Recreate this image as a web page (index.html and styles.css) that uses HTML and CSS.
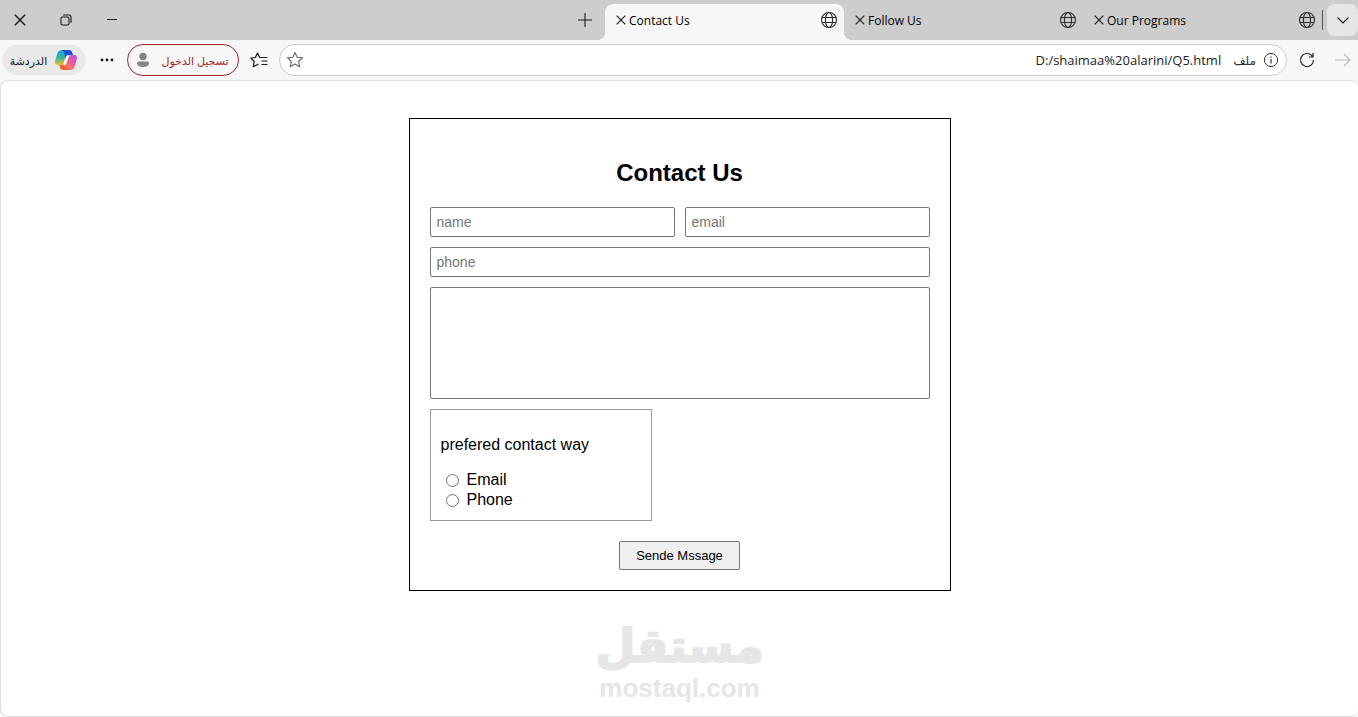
FILE: index.html
```html
<!DOCTYPE html>
<html lang="en">

<head>
    <meta charset="UTF-8">
    <meta name="viewport" content="width=device-width, initial-scale=1.0">
    <title>Contact Us</title>
    <link rel="stylesheet" href="styles.css">
</head>

<body>

    <!-- Shared icons -->
    <svg class="icon-defs" aria-hidden="true">
        <symbol id="icon-close" viewBox="0 0 10 10">
            <path d="M0.7 0.7 L9.3 9.3 M9.3 0.7 L0.7 9.3" fill="none" stroke="currentColor" stroke-width="1.2"/>
        </symbol>
        <symbol id="icon-globe" viewBox="0 0 18 18">
            <g fill="none" stroke="#2b2b2b" stroke-width="1.1">
                <circle cx="9" cy="9" r="7.5"/>
                <ellipse cx="9" cy="9" rx="3.6" ry="7.5"/>
                <path d="M2 6.5 H16 M2 11.5 H16"/>
            </g>
        </symbol>
    </svg>

    <!-- Tab bar -->
    <div class="tab-bar">
        <div class="window-buttons">
            <button type="button" aria-label="Close window">
                <svg width="12" height="12"><use href="#icon-close"/></svg>
            </button>
            <button type="button" aria-label="Restore window">
                <svg width="12" height="12" viewBox="0 0 12 12" fill="none" stroke="currentColor" stroke-width="1.1">
                    <rect x="1" y="3" width="8" height="8" rx="1.5"/>
                    <path d="M3.2 1 H9 Q11 1 11 3 V8.8"/>
                </svg>
            </button>
            <button type="button" aria-label="Minimize window">
                <svg width="12" height="12" viewBox="0 0 12 12"><path d="M1 5.5 H11" stroke="currentColor"/></svg>
            </button>
        </div>
        <button type="button" class="new-tab" aria-label="New tab">
            <svg width="16" height="16" viewBox="0 0 16 16"><path d="M8 1 V15 M1 8 H15" stroke="currentColor" stroke-width="1.1"/></svg>
        </button>
        <div class="tab active">
            <button type="button" aria-label="Close tab"><svg width="10" height="10"><use href="#icon-close"/></svg></button>
            <span>Contact Us</span>
            <svg class="globe" width="18" height="18"><use href="#icon-globe"/></svg>
        </div>
        <div class="tab">
            <button type="button" aria-label="Close tab"><svg width="10" height="10"><use href="#icon-close"/></svg></button>
            <span>Follow Us</span>
            <svg class="globe" width="18" height="18"><use href="#icon-globe"/></svg>
        </div>
        <div class="tab">
            <button type="button" aria-label="Close tab"><svg width="10" height="10"><use href="#icon-close"/></svg></button>
            <span>Our Programs</span>
            <svg class="globe" width="18" height="18"><use href="#icon-globe"/></svg>
        </div>
        <div class="divider"></div>
        <button type="button" class="tab-menu" aria-label="Tab menu">
            <svg width="14" height="14" viewBox="0 0 14 14"><path d="M1.5 4.5 L7 10 L12.5 4.5" fill="none" stroke="currentColor" stroke-width="1.2"/></svg>
        </button>
    </div>

    <!-- Toolbar -->
    <div class="toolbar">
        <button type="button" class="chat">
            <span dir="rtl" lang="ar">الدردشة</span>
            <svg width="24" height="22" viewBox="0 0 24 22">
                <defs>
                    <linearGradient id="cool" x1="0" y1="0" x2="0" y2="1">
                        <stop offset="0" stop-color="#1b9de2"/>
                        <stop offset="0.5" stop-color="#37b6a0"/>
                        <stop offset="1" stop-color="#f1c318"/>
                    </linearGradient>
                    <linearGradient id="warm" x1="1" y1="0" x2="0.2" y2="1">
                        <stop offset="0" stop-color="#a35cf0"/>
                        <stop offset="0.5" stop-color="#ee5a9a"/>
                        <stop offset="1" stop-color="#fb8a44"/>
                    </linearGradient>
                </defs>
                <path d="M8 1 H14 L9.5 14 Q8.8 16 6.8 16 H4 Q0 16 1.2 11.5 L3.4 4.5 Q4.5 1 8 1 Z" fill="url(#cool)"/>
                <path d="M8 1 H15.5 Q17.5 1 18.2 3.5 L19 6 H15 Q12.8 6 12 8.5 L11 11 Q11.8 4 8 1 Z" fill="#1c4fd1"/>
                <path d="M16 21 H10 L14.5 8 Q15.2 6 17.2 6 H20 Q24 6 22.8 10.5 L20.6 17.5 Q19.5 21 16 21 Z" fill="url(#warm)"/>
                <path d="M16 21 H9 Q6.7 21 6 18.5 L5.2 16 H7 Q9 16 9.8 13.5 L11 10.5 Q10.5 18 16 21 Z" fill="#f4653c"/>
                <path d="M13.5 7.5 L10.5 15" stroke="#fff" stroke-width="2.4" stroke-linecap="round"/>
            </svg>
        </button>
        <button type="button" class="more" aria-label="More">
            <svg width="14" height="4" viewBox="0 0 14 4" fill="currentColor">
                <circle cx="2" cy="2" r="1.4"/>
                <circle cx="7" cy="2" r="1.4"/>
                <circle cx="12" cy="2" r="1.4"/>
            </svg>
        </button>
        <button type="button" class="sign-in">
            <svg width="12" height="16" viewBox="0 0 12 16" fill="#858585">
                <circle cx="6" cy="4.5" r="3.7"/>
                <path d="M1.5 9.5 H10.5 Q12 9.5 12 11 Q12 15 6 15 Q0 15 0 11 Q0 9.5 1.5 9.5 Z"/>
            </svg>
            <span dir="rtl" lang="ar">تسجيل الدخول</span>
        </button>
        <button type="button" class="favorites" aria-label="Favorites">
            <svg width="18" height="16" viewBox="0 0 18 16" fill="none" stroke="currentColor" stroke-width="1.2" stroke-linejoin="round" stroke-linecap="round">
                <path d="M11 5.5 H9.6 L7.5 1 L5.4 5.5 L1 6.2 L4.2 9.5 L3.3 14.7 L8 12.2 M11 5.5 H17 M12 9 H17 M12 12.5 H17"/>
            </svg>
        </button>
        <div class="address-bar">
            <button type="button" aria-label="Add to favorites">
                <svg width="18" height="18" viewBox="0 0 18 18" fill="none" stroke="#666" stroke-width="1.1" stroke-linejoin="round">
                    <path d="M9 1.5 L11.2 6.3 L16.5 6.9 L12.6 10.5 L13.7 15.8 L9 13.1 L4.3 15.8 L5.4 10.5 L1.5 6.9 L6.8 6.3 Z"/>
                </svg>
            </button>
            <input type="text" class="url" aria-label="Address" value="D:/shaimaa%20alarini/Q5.html">
            <span class="file" dir="rtl" lang="ar">ملف</span>
            <svg width="16" height="16" viewBox="0 0 16 16" fill="none" stroke="#333">
                <circle cx="8" cy="8" r="6.6"/>
                <path d="M8 7 V11.5 M8 4.5 V5.7" stroke-width="1.2"/>
            </svg>
        </div>
        <button type="button" class="reload" aria-label="Reload">
            <svg width="16" height="16" viewBox="0 0 16 16" fill="none" stroke="#222" stroke-width="1.2">
                <path d="M14.5 8 A6.5 6.5 0 1 1 12.8 3.6 L14 5 M14 1 V5 H10"/>
            </svg>
        </button>
        <button type="button" class="forward" aria-label="Forward">
            <svg width="18" height="16" viewBox="0 0 18 16" fill="none" stroke="#bbb" stroke-width="1.2">
                <path d="M1 8 H16 M10 2 L16 8 L10 14"/>
            </svg>
        </button>
    </div>

    <!-- Page -->
    <main class="page">
        <form class="contact-form">
            <h2>Contact Us</h2>
            <div class="fields">
                <input type="text" placeholder="name" aria-label="name">
                <input type="email" placeholder="email" aria-label="email">
                <input type="tel" class="wide" placeholder="phone" aria-label="phone">
                <textarea class="wide" aria-label="message"></textarea>
            </div>
            <div class="contact-way" role="radiogroup" aria-labelledby="way-title">
                <p id="way-title">prefered contact way</p>
                <div class="option">
                    <input type="radio" id="way-email" name="way">
                    <label for="way-email">Email</label>
                </div>
                <div class="option">
                    <input type="radio" id="way-phone" name="way">
                    <label for="way-phone">Phone</label>
                </div>
            </div>
            <button type="button" class="send">Sende Mssage</button>
        </form>

        <div class="watermark">
            <span class="watermark-name" dir="rtl" lang="ar">مستقل</span>
            <span class="watermark-site">mostaql.com</span>
        </div>
    </main>

</body>

</html>
```

FILE: styles.css
```css
* {
    box-sizing: border-box;
}

body {
    display: flex;
    flex-direction: column;
    min-height: 100vh;
    margin: 0;
    background-color: #f7f7f7;
    font-family: "Liberation Sans", Arial, sans-serif;
    color: #000;
}

svg {
    display: block;
    flex-shrink: 0;
}

.icon-defs {
    display: none;
}

/* Browser bars */
.tab-bar,
.toolbar {
    display: flex;
    align-items: center;
    height: 40px;
    font-family: "Open Sans", "DejaVu Sans", sans-serif;
    font-size: 12px;
}

.tab-bar {
    background-color: #cdcdcd;
}

.tab-bar button,
.toolbar button {
    display: flex;
    align-items: center;
    justify-content: center;
    padding: 0;
    border: none;
    background: none;
    color: #1a1a1a;
    font: inherit;
}

.toolbar .chat,
.toolbar .sign-in {
    font-size: 11px;
}

.window-buttons {
    display: flex;
    gap: 34px;
    padding-left: 14px;
}

.tab-bar .new-tab {
    width: 40px;
    height: 40px;
    margin-left: auto;
}

.tab {
    display: flex;
    align-items: center;
    gap: 3px;
    width: 239px;
    height: 36px;
    margin-top: 4px;
    padding: 0 6px 4px 11px;
}

.tab .globe {
    margin-left: auto;
}

.tab.active {
    position: relative;
    background-color: #f7f7f7;
    border-radius: 8px 8px 0 0;
}

/* Curved feet of the active tab */
.tab.active::before,
.tab.active::after {
    content: "";
    position: absolute;
    bottom: 0;
    width: 8px;
    height: 8px;
}

.tab.active::before {
    right: 100%;
    background: radial-gradient(circle at 0 0, #cdcdcd 8px, #f7f7f7 8px);
}

.tab.active::after {
    left: 100%;
    background: radial-gradient(circle at 100% 0, #cdcdcd 8px, #f7f7f7 8px);
}

.divider {
    width: 1px;
    height: 20px;
    margin-right: 4px;
    background-color: #555;
}

.tab-bar .tab-menu {
    width: 31px;
    height: 32px;
    border-radius: 8px;
    background-color: #e6e6e6;
}

.toolbar .chat {
    gap: 7px;
    width: 84px;
    height: 30px;
    margin-left: 2px;
    border-radius: 15px;
    background-color: #e9e9e9;
}

.toolbar .more {
    width: 41px;
    height: 30px;
}

.toolbar .sign-in {
    gap: 12px;
    width: 112px;
    height: 32px;
    border: 1px solid #a4262c;
    border-radius: 16px;
    color: #a4262c;
}

.toolbar .favorites {
    width: 40px;
    height: 32px;
}

.address-bar {
    display: flex;
    align-items: center;
    flex: 1;
    height: 32px;
    padding: 0 7px 0 6px;
    border: 1px solid #ccc;
    border-radius: 16px;
    background-color: #fff;
}

.address-bar .url {
    flex: 1;
    min-width: 0;
    padding: 0;
    border: none;
    outline: none;
    background: none;
    font-family: inherit;
    font-size: 13px;
    text-align: right;
    color: #222;
}

.address-bar .file {
    margin: 0 7px 0 12px;
    color: #333;
}

.toolbar .reload {
    width: 40px;
    height: 32px;
}

.toolbar .forward {
    width: 31px;
    height: 32px;
}

/* Page */
.page {
    display: flex;
    flex: 1;
    flex-direction: column;
    align-items: center;
    padding-top: 37px;
    border: 1px solid #dedede;
    border-right: none;
    border-radius: 8px;
    background-color: #fff;
}

.contact-form {
    width: 100%;
    max-width: 542px;
    padding: 20px;
    border: 1px solid #000;
}

.contact-form h2 {
    margin: 20px 0;
    font-size: 24px;
    line-height: 28px;
    text-align: center;
}

.fields {
    display: grid;
    grid-template-columns: 1fr 1fr;
    gap: 10px;
}

.fields input,
.fields textarea {
    width: 100%;
    height: 30px;
    padding: 5px 6px;
    border: 1px solid #767676;
    border-radius: 2px;
    font-family: inherit;
    font-size: 14px;
}

.fields textarea {
    display: block;
    height: 112px;
    resize: none;
}

.fields .wide {
    grid-column: 1 / 3;
}

.contact-way {
    width: 222px;
    margin: 10px 0 20px;
    padding: 10px;
    border: 1px solid #999;
}

.contact-way p {
    margin: 16px 0;
    line-height: 18px;
}

.option {
    display: flex;
    align-items: center;
    line-height: 20px;
}

.option input {
    margin: 0 8px 0 5px;
}

.send {
    display: block;
    margin: 0 auto;
    padding: 6px 16px;
    border: 1px solid #767676;
    border-radius: 2px;
    background-color: #efefef;
    color: #000;
    font-family: inherit;
    font-size: 13px;
    line-height: 15px;
}

.watermark {
    display: flex;
    flex-direction: column;
    align-items: center;
    margin-top: 28px;
    color: #e6e6e6;
    font-weight: bold;
}

.watermark-name {
    font-family: "DejaVu Sans", sans-serif;
    font-size: 46px;
    line-height: 54px;
    -webkit-text-stroke: 2px #e6e6e6;
}

.watermark-site {
    font-size: 26px;
    line-height: 30px;
}
```
